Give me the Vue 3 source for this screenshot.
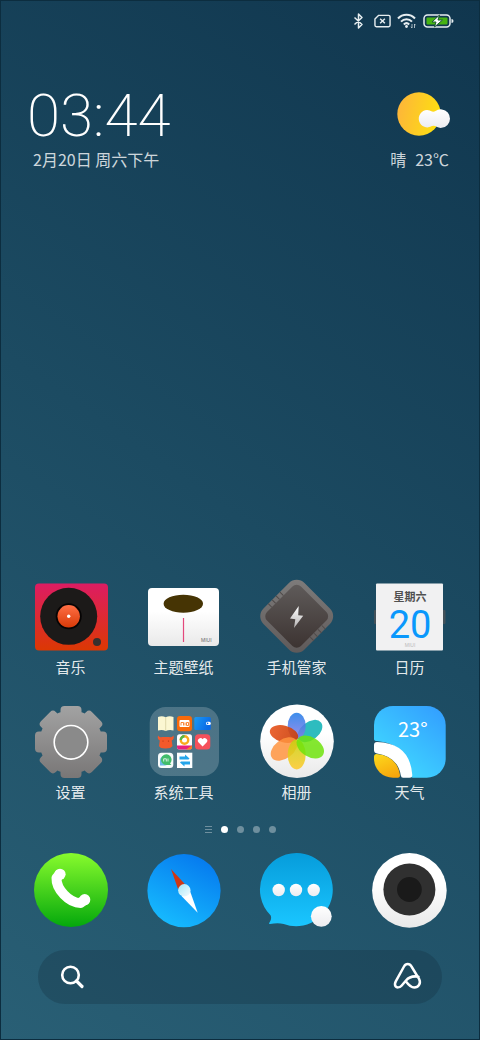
<script setup>
import { ref } from "vue";

const keyword = ref("");
// 当前桌面页
const current = ref(0);
const pages = 4;

// 齿轮的四条齿，每条旋转 45°
const teeth = [0, 45, 90, 135];
</script>

<template>
  <div class="home">
    <div class="status">
      <svg class="s-bt" viewBox="0 0 11 16" role="img" aria-label="蓝牙">
        <path d="M1.5 4.5 9 11.5 5.5 15V1L9 4.5 1.5 11.5" />
      </svg>
      <svg class="s-sim" viewBox="0 0 18 14" role="img" aria-label="无 SIM 卡">
        <path d="M5 1h10.5A1.5 1.5 0 0 1 17 2.5v9a1.5 1.5 0 0 1-1.5 1.5h-13A1.5 1.5 0 0 1 1 11.5V5z" />
        <path d="M6.5 4.5l5 5m0-5l-5 5" />
      </svg>
      <svg class="s-wifi" viewBox="0 0 20 16" role="img" aria-label="WLAN">
        <path d="M1 5.5a11.5 11.5 0 0 1 17 0M4 8.6a7.6 7.6 0 0 1 11 0M6.8 11.4a4 4 0 0 1 5.4 0" />
        <circle cx="9.5" cy="13.5" r="1.4" />
        <path class="thin" d="M15 11v4m-1-1.2 1 1.2M17.5 15v-4m1 1.2-1-1.2" />
      </svg>
      <svg class="s-bat" viewBox="0 0 31 14" role="img" aria-label="正在充电">
        <rect class="shell" x="1" y="1" width="26" height="12" rx="3.5" />
        <rect class="level" x="3.5" y="3.5" width="21" height="7" rx="1" />
        <path class="tip" d="M28.5 5a2 2 0 0 1 0 4z" />
        <path class="bolt" d="M16.5 1 9 8h4l-1.5 5L19.5 6H15z" />
      </svg>
    </div>

    <header class="widgets">
      <div class="clock">
        <time class="time">03:44</time>
        <p class="date">2月20日 周六下午</p>
      </div>
      <div class="weather">
        <svg viewBox="0 0 54 44" aria-hidden="true">
          <defs>
            <linearGradient id="sun" x1="0" y1="0.3" x2="1" y2="0.5">
              <stop offset="0" stop-color="#fdb53a" />
              <stop offset="1" stop-color="#fde010" />
            </linearGradient>
            <linearGradient id="cloud" x1="0" y1="0" x2="0" y2="1">
              <stop offset="0" stop-color="#fff" />
              <stop offset="1" stop-color="#ececf0" />
            </linearGradient>
          </defs>
          <circle cx="22" cy="22" r="21.7" fill="url(#sun)" />
          <path
            d="M30 18a8.7 8.7 0 0 1 5 1.5q2 .5 3.500-.6a9.3 9.3 0 1 1-.3 15.2q-1.6-.8-3.2 0A8.7 8.7 0 1 1 30 18z"
            fill="url(#cloud)"
          />
        </svg>
        <p class="date"><span>晴</span><span>23℃</span></p>
      </div>
    </header>

    <main class="apps">
      <button class="app" type="button">
        <svg viewBox="0 0 75 75" aria-hidden="true">
          <defs>
            <linearGradient id="music" x1="0" y1="0" x2="0" y2="1">
              <stop offset="0" stop-color="#dd1c63" />
              <stop offset="1" stop-color="#dc3803" />
            </linearGradient>
            <linearGradient id="vinyl" x1="0" y1="0" x2="0" y2="1">
              <stop offset="0" stop-color="#ff6f45" />
              <stop offset="1" stop-color="#d83a08" />
            </linearGradient>
          </defs>
          <rect x="2" y="4.5" width="73" height="67" rx="4" fill="url(#music)" />
          <circle cx="35.7" cy="37.3" r="28.5" fill="#1c1a19" />
          <circle cx="35.7" cy="37.3" r="13" fill="#060404" />
          <circle cx="35.7" cy="37.3" r="11.2" fill="url(#vinyl)" />
          <circle cx="35.7" cy="37.3" r="1.7" fill="#fff" />
          <circle cx="64" cy="63" r="4" fill="#38302e" />
        </svg>
        <span>音乐</span>
      </button>

      <button class="app" type="button">
        <svg viewBox="0 0 75 75" aria-hidden="true">
          <defs>
            <linearGradient id="paper" x1="0" y1="0" x2="0" y2="1">
              <stop offset="0.4" stop-color="#fff" />
              <stop offset="1" stop-color="#e9e9e9" />
            </linearGradient>
          </defs>
          <rect x="2" y="9" width="71" height="58" rx="4" fill="url(#paper)" />
          <ellipse cx="37.3" cy="24.7" rx="19.7" ry="9" fill="#463404" />
          <path d="M37.5 39v24" stroke="#e4487c" stroke-width="1.2" />
          <text x="55" y="63" class="miui dark">MIUI</text>
        </svg>
        <span>主题壁纸</span>
      </button>

      <button class="app" type="button">
        <svg viewBox="0 0 75 75" aria-hidden="true">
          <defs>
            <linearGradient id="guard-rim" x1="0" y1="0" x2="1" y2="1">
              <stop offset="0" stop-color="#7f7d7c" />
              <stop offset="1" stop-color="#5d5858" />
            </linearGradient>
            <linearGradient id="guard" x1="0" y1="0" x2="1" y2="1">
              <stop offset="0" stop-color="#605c5b" />
              <stop offset="1" stop-color="#3b3230" />
            </linearGradient>
            <linearGradient id="flash" x1="0" y1="0" x2="0" y2="1">
              <stop offset="0" stop-color="#fff" />
              <stop offset="1" stop-color="#b5b2b2" />
            </linearGradient>
          </defs>
          <g transform="rotate(45 37.7 37.3)">
            <rect x="8.7" y="8.3" width="58" height="58" rx="11" fill="url(#guard-rim)" />
            <path
              d="M8.7 32h5m-5 5.5h5m-5 5.5h5m-5 5.5h5M62 26h5m-5 5.5h5m-5 5.5h5m-5 5.5h5"
              stroke="#4f4a49"
              stroke-width="1"
            />
            <rect x="13.7" y="13.3" width="48" height="48" rx="6" fill="url(#guard)" />
          </g>
          <path d="M39.7 27 31 39.5l5.3.8L35 49l9.2-12.2-5-.6z" fill="url(#flash)" />
        </svg>
        <span>手机管家</span>
      </button>

      <button class="app" type="button">
        <svg viewBox="0 0 75 75" aria-hidden="true">
          <rect x="2" y="31" width="71.5" height="14" rx="1" fill="#44525a" />
          <rect x="4" y="4.5" width="67" height="67" rx="1" fill="#f1f1f2" />
          <text x="38" y="22" class="weekday">星期六</text>
          <text x="38" y="59" class="day">20</text>
          <text x="38" y="68" class="miui" text-anchor="middle">MIUI</text>
        </svg>
        <span>日历</span>
      </button>

      <button class="app" type="button">
        <svg viewBox="0 0 75 75" aria-hidden="true">
          <defs>
            <linearGradient id="gear" x1="0" y1="0" x2="0" y2="1">
              <stop offset="0" stop-color="#a3a3a3" />
              <stop offset="1" stop-color="#787676" />
            </linearGradient>
            <clipPath id="gear-shape">
              <circle cx="38" cy="38" r="31.5" />
              <rect
                v-for="deg in teeth"
                :key="deg"
                x="27.5"
                y="2"
                width="21"
                height="72"
                rx="4"
                :transform="`rotate(${deg} 38 38)`"
              />
            </clipPath>
          </defs>
          <rect x="1" y="1" width="74" height="74" fill="url(#gear)" clip-path="url(#gear-shape)" />
          <circle cx="38" cy="38.3" r="16.8" fill="#8a8a8a" stroke="#fff" stroke-width="1.6" />
        </svg>
        <span>设置</span>
      </button>

      <button class="app" type="button">
        <svg viewBox="0 0 75 75" aria-hidden="true">
          <defs>
            <linearGradient id="wallet" x1="0" y1="0" x2="1" y2="0.4">
              <stop offset="0" stop-color="#1a9bf5" />
              <stop offset="1" stop-color="#0a6ae6" />
            </linearGradient>
          </defs>
          <rect x="3.7" y="3" width="69.3" height="69" rx="16" fill="#fff" fill-opacity="0.2" />
          <!-- 阅读 -->
          <path d="M12 13q4-1.5 7.7.2 3.7-1.7 7.8-.2v13.5q-4-1.2-7.8.4-3.7-1.6-7.7-.4z" fill="#fbf7d2" />
          <path d="M19.7 13v14" stroke="#d5cfa0" stroke-width="0.8" />
          <!-- 小米商城 -->
          <rect x="31" y="12" width="15" height="15.3" rx="3" fill="#f96a09" />
          <rect x="33.5" y="16" width="10" height="7" rx="1" fill="#fff" />
          <path d="M35 21.5v-3h2.5v3m1.5-3v3m1.5-3h2v3h-2z" fill="none" stroke="#f96a09" stroke-width="0.8" />
          <!-- 钱包 -->
          <rect x="48.3" y="13" width="16.5" height="13" rx="1.5" fill="url(#wallet)" />
          <rect x="60" y="17.8" width="4.8" height="3.2" rx="1.5" fill="#fff" />
          <circle cx="61.6" cy="19.4" r="0.8" fill="#0a6ae6" />
          <!-- 兔子 -->
          <path d="M12 31.5q1.5 2.5 4 1.5h7q3 1 4.5-1.5 1 3.5-1.8 5l.8 5.5q-1.5 2.5-7 2.5t-6.5-2.5l.8-5.5q-2.8-1.500-1.8-5z" fill="#f4592b" />
          <circle cx="17" cy="37" r="0.6" fill="#a8300f" />
          <circle cx="22.5" cy="37" r="0.6" fill="#a8300f" />
          <!-- 视频 -->
          <rect x="31" y="30.3" width="15" height="15.3" rx="2.5" fill="#fff" />
          <circle cx="38.5" cy="36" r="3.7" fill="none" stroke="#f9a91b" stroke-width="2.4" />
          <path d="M34.8 36a3.7 3.7 0 0 1 3.7-3.7" fill="none" stroke="#52b848" stroke-width="2.4" />
          <path d="M31 41.5h15V43a2.5 2.5 0 0 1-2.5 2.5h-10A2.5 2.5 0 0 1 31 43z" fill="#e9207b" />
          <path d="M40 45.5l6-4V43a2.5 2.5 0 0 1-2.5 2.5z" fill="#f7861e" />
          <!-- 健康 -->
          <rect x="49" y="30.3" width="15.3" height="15.3" rx="3.5" fill="#f5515b" />
          <path d="M56.6 42.5l-4.2-4.2a2.5 2.5 0 0 1 4.2-3 2.5 2.5 0 0 1 4.2 3z" fill="#fff" />
          <!-- 社区 -->
          <rect x="12" y="48.7" width="15.3" height="15.3" rx="3.5" fill="#f8fbfb" />
          <path d="M14 61.5v-5a5 5 0 1 1 5 5z" fill="#6cb9e8" />
          <path d="M25.5 61l-1.5-1.5a5.3 5.3 0 1 0-3.5 1.5z" fill="#42bd6b" />
          <path d="M17.7 57.5v-2.7h2.6v2.7m1.7-3v3" fill="none" stroke="#fff" stroke-width="0.8" />
          <!-- 换机 -->
          <rect x="31" y="48.7" width="15.3" height="15.3" fill="#fff" />
          <path d="M33.5 52.5h5.500v-2l4.500 4-1 1h-9zM44 60.5h-5.500v2l-4.500-4 1-1h9z" fill="#25a5ea" />
        </svg>
        <span>系统工具</span>
      </button>

      <button class="app" type="button">
        <svg viewBox="0 0 75 75" aria-hidden="true">
          <defs>
            <linearGradient id="petal-blue" x1="0" y1="0" x2="0" y2="1">
              <stop offset="0" stop-color="#1b7ae8" />
              <stop offset="1" stop-color="#8c7be8" />
            </linearGradient>
            <linearGradient id="petal-red" x1="0" y1="0" x2="1" y2="0">
              <stop offset="0" stop-color="#e8541c" />
              <stop offset="1" stop-color="#c93d08" />
            </linearGradient>
            <linearGradient id="petal-yellow" x1="0" y1="0" x2="0" y2="1">
              <stop offset="0" stop-color="#c4d20c" />
              <stop offset="1" stop-color="#ffc928" />
            </linearGradient>
          </defs>
          <circle cx="38" cy="37.3" r="36.8" fill="url(#paper)" />
          <ellipse cx="51" cy="27" rx="14" ry="9" transform="rotate(-38 51 27)" fill="#17b5b8" fill-opacity="0.9" />
          <ellipse cx="37.7" cy="22" rx="9" ry="13.3" fill="url(#petal-blue)" fill-opacity="0.85" />
          <ellipse cx="25" cy="30" rx="14.5" ry="8.3" transform="rotate(15 25 30)" fill="url(#petal-red)" fill-opacity="0.9" />
          <ellipse cx="25" cy="45" rx="15" ry="9.5" transform="rotate(-37 25 45)" fill="#ff9440" fill-opacity="0.85" />
          <ellipse cx="37.7" cy="50.5" rx="9" ry="15" fill="url(#petal-yellow)" fill-opacity="0.85" />
          <ellipse cx="51.3" cy="43" rx="15" ry="9.7" transform="rotate(32 51.3 43)" fill="#6fe30c" fill-opacity="0.85" />
        </svg>
        <span>相册</span>
      </button>

      <button class="app" type="button">
        <svg viewBox="0 0 75 75" aria-hidden="true">
          <defs>
            <linearGradient id="sky" x1="1" y1="0" x2="0.2" y2="1">
              <stop offset="0" stop-color="#329bff" />
              <stop offset="1" stop-color="#41deff" />
            </linearGradient>
            <linearGradient id="sunset" x1="0.2" y1="0" x2="0.6" y2="1">
              <stop offset="0" stop-color="#fcd71c" />
              <stop offset="1" stop-color="#f7a60c" />
            </linearGradient>
            <clipPath id="sky-shape">
              <rect x="2" y="2" width="71.7" height="71.7" rx="19" />
            </clipPath>
          </defs>
          <g clip-path="url(#sky-shape)">
            <path d="M2 2h72v72H41q-2 0-2-3Q36 40 5 37q-3 0-3-2z" fill="url(#sky)" />
            <path d="M5 38Q38 39 40.3 71q0 3-3 3h-6q-2 0-2.5-2.5Q26 53 5 49.5 2 49 2 46v-5q0-3 3-3z" fill="#fff" />
            <path d="M4.5 50Q25 52 28 71q0 3-2.5 3H2V53q0-3 2.5-3z" fill="url(#sunset)" />
          </g>
          <text x="26" y="33" class="degree">23°</text>
        </svg>
        <span>天气</span>
      </button>
    </main>

    <nav class="pager" aria-label="桌面页">
      <button class="feed" type="button" aria-label="负一屏"></button>
      <button
        v-for="n in pages"
        :key="n"
        class="dot"
        :class="{ active: current === n - 1 }"
        type="button"
        :aria-label="`第${n}页`"
        @click="current = n - 1"
      ></button>
    </nav>

    <footer class="dock">
      <button class="app" type="button" aria-label="电话">
        <svg viewBox="0 0 75 75">
          <defs>
            <linearGradient id="call" x1="0" y1="0" x2="0" y2="1">
              <stop offset="0" stop-color="#88fb2d" />
              <stop offset="1" stop-color="#04a80c" />
            </linearGradient>
          </defs>
          <circle cx="38" cy="37" r="37" fill="url(#call)" />
          <path
            d="M26.5 21.5 23.5 25C23 36 36 50 47.5 50l4-3"
            fill="none"
            stroke="#fff"
            stroke-width="10"
            stroke-linejoin="round"
            stroke-linecap="round"
          />
          <circle cx="27" cy="21.3" r="5.6" fill="#fff" />
          <circle cx="51.7" cy="46.7" r="5.6" fill="#fff" />
        </svg>
      </button>
      <button class="app" type="button" aria-label="浏览器">
        <svg viewBox="0 0 75 75">
          <defs>
            <linearGradient id="browser" x1="0.75" y1="0" x2="0.25" y2="1">
              <stop offset="0" stop-color="#0578ee" />
              <stop offset="1" stop-color="#17bdff" />
            </linearGradient>
            <linearGradient id="hub" x1="0" y1="0" x2="1" y2="1">
              <stop offset="0" stop-color="#a5e6f5" />
              <stop offset="1" stop-color="#f4fcff" />
            </linearGradient>
          </defs>
          <circle cx="38" cy="37.7" r="36.6" fill="url(#browser)" />
          <path d="M25 16 32 36l7.7-4z" fill="#cf3714" />
          <path d="M51.7 59.7 35.5 43l8.5-5z" fill="#fff" />
          <circle cx="38.3" cy="37.3" r="6.2" fill="url(#hub)" />
        </svg>
      </button>
      <button class="app" type="button" aria-label="短信">
        <svg viewBox="0 0 75 75">
          <defs>
            <linearGradient id="sms" x1="0" y1="0" x2="0" y2="1">
              <stop offset="0" stop-color="#069cdb" />
              <stop offset="1" stop-color="#1ac6ff" />
            </linearGradient>
          </defs>
          <path
            d="M37.7 0a36.6 36.6 0 1 1-13 71Q19 69.5 11 71q-1.5 0-.5-1.5 2.5-3 1.2-7A36.6 36.6 0 0 1 37.7 0z"
            fill="url(#sms)"
          />
          <g fill="url(#cloud)">
            <circle cx="19.7" cy="37" r="6.2" />
            <circle cx="37" cy="37" r="6.2" />
            <circle cx="54.7" cy="37" r="6.2" />
            <circle cx="62.3" cy="63.3" r="10.4" />
          </g>
        </svg>
      </button>
      <button class="app" type="button" aria-label="相机">
        <svg viewBox="0 0 75 75">
          <circle cx="37.4" cy="37.4" r="37.3" fill="url(#paper)" />
          <circle cx="37.4" cy="36.5" r="26" fill="#303030" />
          <circle cx="37.4" cy="36.5" r="12.4" fill="#1a1a1a" />
        </svg>
      </button>
    </footer>

    <form class="search" role="search" @submit.prevent>
      <button type="submit" aria-label="搜索">
        <svg viewBox="0 0 28 28">
          <circle cx="12.5" cy="12" r="8.3" />
          <path d="M18.5 18 24 23.5" stroke-width="3.2" />
        </svg>
      </button>
      <input v-model="keyword" type="text" aria-label="搜索内容" />
      <button type="button" aria-label="小爱同学">
        <svg viewBox="0 0 28 28">
          <path
            d="M24.5 13.7C18 12.5 14.5 14.5 12 17.5l-4.5 5.2C5.5 25 2.5 24.7 1.5 23.2c-1.2-1.8-.4-3.5.4-5L10 3.5C11.7.3 15.7.3 17.5 3.5l7.7 12.7c2 4-.7 8.300-5 8.300-3.500 0-6-3-8.200-6"
            stroke-width="2.5"
          />
        </svg>
      </button>
    </form>
  </div>
</template>

<style>
body {
  background: #1c4b62;
}
</style>

<style scoped>
.home {
  display: flex;
  flex-direction: column;
  box-sizing: border-box;
  min-height: 100vh;
  padding-bottom: 36px;
  color: #fff;
  font-family: "Noto Sans CJK SC", sans-serif;
  background: linear-gradient(35deg, #295f75 0%, #1c4b62 50%, #10364e 100%);
  box-shadow: inset 0 0 0 1px #0c2d3f;
}

button {
  padding: 0;
  border: 0;
  background: none;
  color: inherit;
  font: inherit;
  cursor: pointer;
}

svg {
  display: block;
  overflow: visible;
}

/* 状态栏 */
.status {
  display: flex;
  align-items: center;
  justify-content: flex-end;
  gap: 6px;
  height: 41px;
  padding-right: 26px;
}

.status svg {
  fill: none;
  stroke: #e6edf0;
  stroke-width: 1.5;
  stroke-linejoin: round;
}

.s-bt {
  width: 11px;
  height: 16px;
  margin-right: 4px;
}

.s-sim {
  width: 17px;
  height: 14px;
}

.s-wifi {
  width: 20px;
  height: 16px;
}

.s-wifi path {
  stroke-width: 2;
}

.s-wifi .thin {
  stroke-width: 1;
  opacity: 0.7;
}

.s-wifi circle {
  fill: #e6edf0;
  stroke: none;
}

.s-bat {
  width: 31px;
  height: 14px;
}

.s-bat .level {
  fill: #46b312;
  stroke: none;
}

.s-bat .tip {
  fill: #e6edf0;
  stroke: none;
}

.s-bat .bolt {
  fill: #fff;
  stroke: #1d5a34;
  stroke-width: 1;
}

/* 时钟与天气 */
.widgets {
  display: flex;
  justify-content: space-between;
  padding: 40px 29px 0 27px;
}

.time {
  display: block;
  font-family: Roboto, sans-serif;
  font-size: 60px;
  font-weight: 200;
  line-height: 70px;
}

.date {
  display: flex;
  gap: 9px;
  margin: 0;
  color: rgba(255, 255, 255, 0.8);
  font-size: 16px;
  line-height: 16px;
}

.clock .date {
  padding-left: 6px;
}

.weather {
  display: flex;
  flex-direction: column;
  align-items: flex-end;
  justify-content: flex-end;
}

.weather svg {
  width: 54px;
  height: 44px;
  margin-bottom: 15px;
}

.weather .date {
  padding-right: 2px;
}

/* 图标 */
.apps,
.dock {
  display: grid;
  grid-template-columns: repeat(4, 1fr);
  padding: 0 14px;
}

.apps {
  row-gap: 27px;
  margin-top: auto;
}

.app {
  display: flex;
  flex-direction: column;
  align-items: center;
  gap: 3px;
}

.app svg {
  width: 75px;
  height: 75px;
}

.app span {
  color: rgba(255, 255, 255, 0.9);
  font-size: 15px;
  line-height: 20px;
}

.miui {
  fill: #b9b9b9;
  font: 5px "Liberation Sans", sans-serif;
}

.miui.dark {
  fill: #666;
}

.weekday {
  fill: #505050;
  font-size: 11px;
  font-weight: 700;
  text-anchor: middle;
}

.day {
  fill: #0a98fc;
  font-family: Roboto, sans-serif;
  font-size: 38px;
  font-weight: 400;
  text-anchor: middle;
}

.degree {
  fill: #fff;
  font-size: 20px;
}

/* 页码 */
.pager {
  display: flex;
  justify-content: center;
  gap: 9px;
  margin: 24px 0 20px;
}

.pager button {
  width: 7px;
  height: 7px;
}

.dot {
  border-radius: 50%;
  background: rgba(255, 255, 255, 0.35);
}

.dot.active {
  background: #fff;
}

.feed {
  background: repeating-linear-gradient(rgba(255, 255, 255, 0.35) 0 1px, transparent 1px 3px);
}

/* 搜索栏 */
.search {
  display: flex;
  align-items: center;
  height: 54px;
  margin: 22px 38px 0;
  padding: 0 20px;
  border-radius: 27px;
  background: rgba(20, 48, 62, 0.3);
}

.search input {
  flex: 1;
  min-width: 0;
  padding: 0 12px;
  border: 0;
  outline: 0;
  background: none;
  color: #fff;
  font: 16px "Noto Sans CJK SC", sans-serif;
}

.search svg {
  width: 28px;
  height: 28px;
  fill: none;
  stroke: #fff;
  stroke-width: 2.6;
  stroke-linecap: round;
  stroke-linejoin: round;
}
</style>
